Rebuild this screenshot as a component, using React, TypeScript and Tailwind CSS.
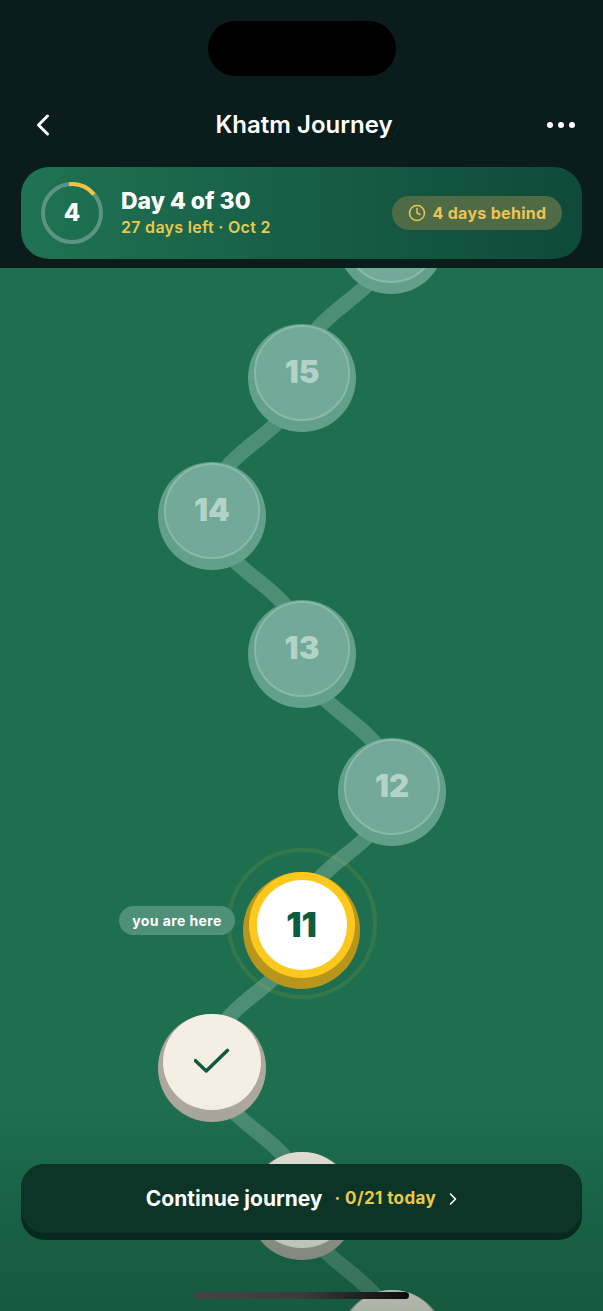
import React from "react";
import { ChevronLeft, ChevronRight, Clock } from "lucide-react";

// day 16 sits behind the header, only its lower edge shows
const UPCOMING = [
  { day: 16, label: "", pos: "left-[337px] top-[-82px]" },
  { day: 15, label: "15", pos: "left-[248px] top-[56px]" },
  { day: 14, label: "14", pos: "left-[158px] top-[194px]" },
  { day: 13, label: "13", pos: "left-[248px] top-[332px]" },
  { day: 12, label: "12", pos: "left-[338px] top-[470px]" },
];

const DONE = [
  { day: 10, pos: "left-[158px] top-[746px]" },
  { day: 9, pos: "left-[248px] top-[884px]" },
  { day: 8, pos: "left-[338px] top-[1022px]" },
];

const ROAD =
  "M391 -34 C391 33 301 37 301 104 C301 171 211 175 211 242 C211 309 301 313 301 380 C301 447 391 451 391 518 C391 585 301 589 301 656 C301 723 211 727 211 794 C211 861 301 865 301 932 C301 999 391 1003 391 1070";

function UpcomingNode({ label, pos }: { label: string; pos: string }) {
  return (
    <div className={`absolute ${pos} flex h-[108px] w-[108px] justify-center rounded-full bg-[#62a08b] pt-px`}>
      <div className="flex h-[96px] w-[96px] items-center justify-center rounded-full border-2 border-[#8bb9a9] bg-[#72a998]">
        <span className="mb-[3px] text-[31px] font-black leading-none text-[#b4d3c8]">{label}</span>
      </div>
    </div>
  );
}

function DoneNode({ pos, check }: { pos: string; check: boolean }) {
  return (
    <div className={`absolute ${pos} flex h-[108px] w-[108px] justify-center rounded-full bg-[#aca89f]`}>
      <div className="flex h-[96px] w-[98px] items-center justify-center rounded-full bg-[#f5efe3]">
        {check && (
          <svg width="36" height="36" viewBox="0 0 36 36" fill="none" className="mt-[-2px]">
            <path d="M1.5 14 L12.5 24.5 L34 3.5" transform="translate(0 4) scale(0.98)" stroke="#0f5b42" strokeWidth="3.6" strokeLinecap="round" strokeLinejoin="round" />
          </svg>
        )}
      </div>
    </div>
  );
}

export default function App() {
  return (
    <div className="relative flex h-[1311px] w-[603px] flex-col overflow-hidden bg-[#1e6f50] font-['Inter',sans-serif]">
      {/* Header */}
      <header className="relative z-20 flex h-[268px] shrink-0 flex-col bg-[#0b1c1c] px-[21px]">
        <div className="mx-auto mt-[21px] h-[55px] w-[188px] rounded-[28px] bg-black" />
        <div className="mt-[25px] flex h-[48px] items-center justify-between">
          <ChevronLeft className="ml-[4px] h-[36px] w-[36px] text-white" strokeWidth={2} />
          <h1 className="text-[24px] font-semibold text-white">Khatm Journey</h1>
          <div className="mr-[7px] flex gap-[5px]">
            <span className="h-[6px] w-[6px] rounded-full bg-white" />
            <span className="h-[6px] w-[6px] rounded-full bg-white" />
            <span className="h-[6px] w-[6px] rounded-full bg-white" />
          </div>
        </div>

        <div className="mt-[18px] flex h-[92px] items-center rounded-[28px] bg-gradient-to-r from-[#1f7353] to-[#0f4a3a] pl-[20px] pr-[20px]">
          <div className="relative flex h-[62px] w-[62px] items-center justify-center">
            <svg width="62" height="62" viewBox="0 0 62 62" className="absolute inset-0">
              <circle cx="31" cy="31" r="29" fill="none" stroke="#5c9483" strokeWidth="4" />
              <path d="M28 2.2 A29 29 0 0 1 53 12.5" fill="none" stroke="#f0c244" strokeWidth="4" />
            </svg>
            <span className="text-[24px] font-extrabold text-white">4</span>
          </div>
          <div className="ml-[18px] flex flex-col">
            <span className="text-[23px] font-extrabold leading-[27px] text-white">Day 4 of 30</span>
            <span className="mt-[2px] text-[16px] font-semibold leading-[21px] tracking-[0.3px] text-[#ecc94b]">27 days left · Oct 2</span>
          </div>
          <div className="ml-auto flex h-[34px] w-[170px] items-center justify-center gap-[7px] rounded-full bg-[#4f6b45]">
            <Clock className="h-[18px] w-[18px] text-[#ecc456]" strokeWidth={2} />
            <span className="text-[16px] font-bold tracking-[0.3px] text-[#ecc456]">4 days behind</span>
          </div>
        </div>
      </header>

      {/* Journey map */}
      <main className="relative flex-1 overflow-hidden">
        <svg width="603" height="1043" viewBox="0 0 603 1043" fill="none" className="absolute inset-0">
          <path d={ROAD} stroke="#4c8e76" strokeWidth="15" />
        </svg>

        {UPCOMING.map((n) => (
          <UpcomingNode key={n.day} label={n.label} pos={n.pos} />
        ))}

        {DONE.map((n) => (
          <DoneNode key={n.day} pos={n.pos} check={n.day === 10} />
        ))}

        {/* Current day */}
        <div className="absolute left-[243px] top-[604px] flex h-[117px] w-[117px] justify-center rounded-full bg-[#b8951b]">
          <div className="flex h-[106px] w-[106px] items-center justify-center rounded-full bg-[#fdc81e]">
            <div className="flex h-[90px] w-[90px] items-center justify-center rounded-full bg-white">
              <span className="mb-[2px] text-[34px] font-black text-[#0f5b42]">11</span>
            </div>
          </div>
        </div>
        <div className="absolute left-[227px] top-[580px] h-[151px] w-[150px] rounded-full border-4 border-[#fdc81e]/10" />

        <div className="absolute left-[119px] top-[638px] flex h-[29px] w-[116px] items-center justify-center rounded-full bg-[#4f9078]">
          <span className="text-[14px] font-bold tracking-[0.4px] text-white">you are here</span>
        </div>

        <div className="absolute bottom-0 left-0 h-[210px] w-full bg-gradient-to-b from-[#02261a]/0 via-[#02261a]/15 via-[40%] to-[#02261a]/30" />
      </main>

      {/* Bottom action */}
      <button className="absolute bottom-[71px] left-[21px] z-10 h-[76px] w-[561px] rounded-[24px] bg-[#08291f] pb-[7px]">
        <div className="flex h-[69px] items-center justify-center rounded-[24px] bg-[#0c3527] pl-[6px]">
          <span className="text-[21px] font-bold text-white">Continue journey</span>
          <span className="ml-[12px] text-[17px] font-bold tracking-[0.4px] text-[#ecc94b]">· 0/21 today</span>
          <ChevronRight className="ml-[7px] h-[20px] w-[20px] text-white" strokeWidth={2} />
        </div>
      </button>

      <div className="absolute bottom-[12px] left-[194px] z-10 h-[7px] w-[215px] rounded-full bg-gradient-to-r from-[#434343] via-[#3c3c3c] to-[#0c0c0c]" />
    </div>
  );
}
